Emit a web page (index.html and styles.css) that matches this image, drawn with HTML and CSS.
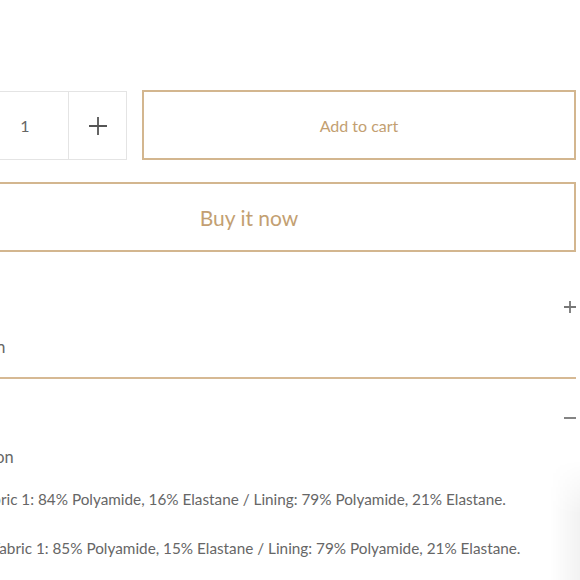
FILE: index.html
```html
<!DOCTYPE html>
<html lang="en">
<head>
<meta charset="utf-8">
<title>Product</title>
<link rel="stylesheet" href="styles.css">
</head>
<body>
<main class="product">
  <div class="buy-row">
    <div class="qty">
      <button class="qty-btn qty-minus" type="button" aria-label="Decrease">
        <svg width="14" height="14" viewBox="0 0 14 14"><path d="M1 7h12" stroke="#555" stroke-width="1.6"/></svg>
      </button>
      <div class="qty-input">1</div>
      <button class="qty-btn qty-plus" type="button" aria-label="Increase">
        <svg width="20" height="20" viewBox="0 0 20 20"><path d="M1 10h18M10 1v18" stroke="#555" stroke-width="1.8"/></svg>
      </button>
    </div>
    <button class="btn btn-cart" type="button">Add to cart</button>
  </div>
  <button class="btn btn-buy" type="button">Buy it now</button>

  <section class="acc acc-closed">
    <div class="acc-head">
      <span class="acc-label"></span>
      <svg class="acc-icon" width="12" height="12" viewBox="0 0 12 12"><path d="M0 6h12M6 0v12" stroke="#777" stroke-width="1.8"/></svg>
    </div>
    <div class="acc-title">Description</div>
  </section>

  <section class="acc acc-open">
    <div class="acc-head">
      <span class="acc-label"></span>
      <svg class="acc-icon" width="12" height="12" viewBox="0 0 12 12"><path d="M0 6h12" stroke="#777" stroke-width="1.8"/></svg>
    </div>
    <div class="acc-title">Composition</div>
    <p class="acc-text">Top: Fabric 1: 84% Polyamide, 16% Elastane / Lining: 79% Polyamide, 21% Elastane.</p>
    <p class="acc-text">Briefs: Fabric 1: 85% Polyamide, 15% Elastane / Lining: 79% Polyamide, 21% Elastane.</p>
  </section>
</main>
<div class="edge-shade"></div>
</body>
</html>
```

FILE: styles.css
```css
html, body {
  margin: 0;
  padding: 0;
  background: #fff;
  overflow: hidden;
}

body {
  font-family: "Lato", "Open Sans", sans-serif;
  color: #666;
}

.product {
  width: 654px;
  margin-left: -78px;
  padding-top: 90px;
}

.buy-row {
  display: flex;
  gap: 15px;
  height: 70px;
}

.qty {
  width: 205px;
  box-sizing: border-box;
  margin-top: 1px;
  height: 69px;
  border: 1px solid #e4e4e4;
  display: flex;
}

.qty-btn {
  border: 0;
  background: none;
  padding: 0;
  display: flex;
  align-items: center;
  justify-content: center;
  cursor: pointer;
}

.qty-minus {
  width: 59px;
  border-right: 1px solid #e4e4e4;
}

.qty-input {
  width: 86px;
  display: flex;
  align-items: center;
  justify-content: center;
  font-size: 16px;
  color: #666;
  border-right: 1px solid #e4e4e4;
}

.qty-plus {
  flex: 1;
}

.btn {
  box-sizing: border-box;
  background: #fff;
  border: 2px solid #d3b68f;
  color: #c39f72;
  font-family: "Lato", "Open Sans", sans-serif;
  cursor: pointer;
  display: flex;
  align-items: center;
  justify-content: center;
}

.btn-cart {
  flex: 1;
  height: 70px;
  font-size: 16px;
}

.btn-buy {
  width: 100%;
  height: 70px;
  margin-top: 22px;
  font-size: 21px;
}

.acc-head {
  display: flex;
  justify-content: space-between;
  align-items: center;
  height: 20px;
}

.acc-icon {
  display: block;
}

.acc-closed {
  margin-top: 45px;
  border-bottom: 2px solid #d6b994;
  padding-bottom: 20px;
}

.acc-title {
  font-size: 16.4px;
  line-height: 20px;
  margin-top: 20px;
  color: #666;
}

.acc-open {
  padding-top: 29px;
}

.acc-open .acc-title {
  margin-top: 19px;
}

.acc-text {
  margin: 22px 0 0;
  padding-left: 23px;
  font-size: 15.3px;
  line-height: 20px;
  color: #666;
}

.acc-text + .acc-text {
  margin-top: 29px;
}

.edge-shade {
  position: fixed;
  right: 0;
  bottom: 0;
  width: 30px;
  height: 120px;
  background: linear-gradient(to right, rgba(0,0,0,0), rgba(0,0,0,0.05));
  -webkit-mask-image: linear-gradient(to bottom, transparent, #000 45%);
  mask-image: linear-gradient(to bottom, transparent, #000 45%);
  pointer-events: none;
}
```
